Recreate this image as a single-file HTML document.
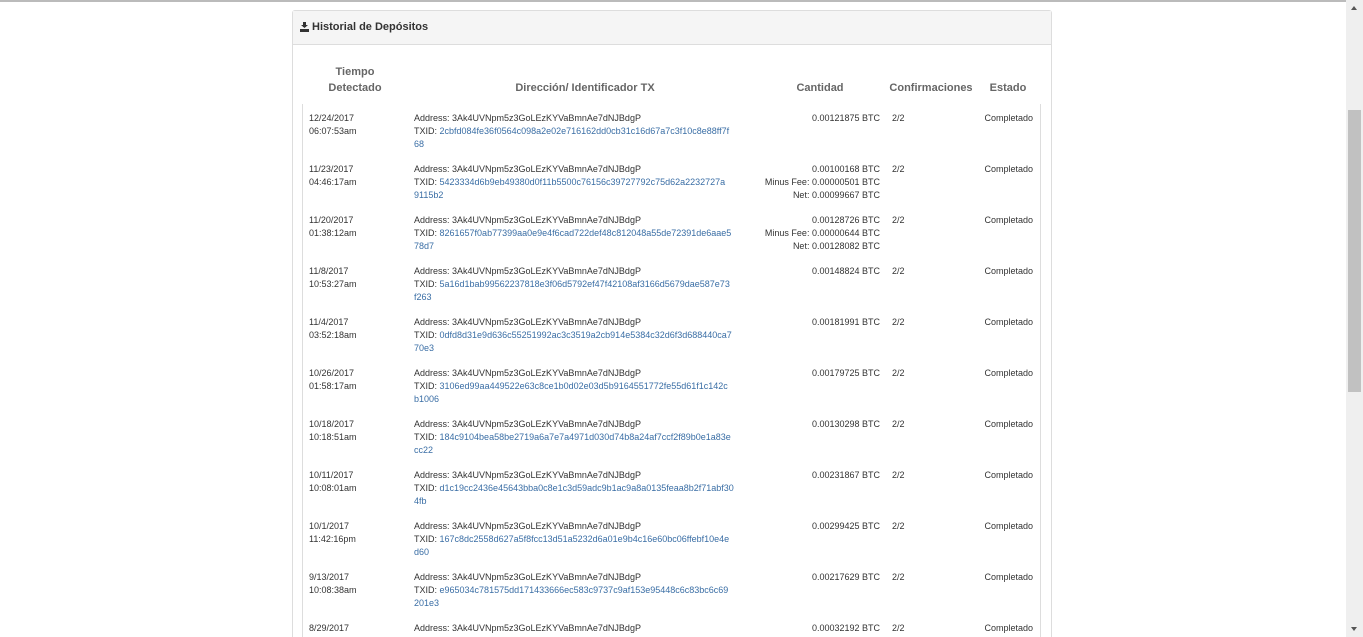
<!DOCTYPE html>
<html><head><meta charset="utf-8"><style>
html,body{margin:0;width:1363px;height:637px;overflow:hidden}
body{background:#fff;font-family:"Liberation Sans",sans-serif;color:#333;position:relative}
.top{position:absolute;left:0;top:0;width:1346px;height:2px;background:#bbb}
.sb{position:absolute;left:1346px;top:0;width:17px;height:637px;background:#efefef}
.thumb{position:absolute;left:1348px;top:110px;width:13px;height:282px;background:#c1c1c1}
.panel{position:absolute;left:292px;top:10px;width:758px;height:626px;border:1px solid #ddd;border-bottom:none;border-radius:3px 3px 0 0}
.ph{height:33px;background:#f5f5f5;border-bottom:1px solid #ddd;font-size:11px;font-weight:bold;line-height:33px;padding-left:19px;color:#333}
.inner{position:absolute;left:302px;top:104px;width:737px;height:533px;border-left:1px solid #ddd;border-right:1px solid #ddd}
.h{position:absolute;font-size:11px;font-weight:bold;color:#666;text-align:center;line-height:16px}
.r{position:absolute;font-size:9px;line-height:13px;color:#333;white-space:nowrap}
a{color:#3a6ea5;text-decoration:none}
</style></head><body>
<div class="top"></div>
<div class="sb"><div style="position:absolute;left:5px;top:6px;border:3.5px solid transparent;border-bottom:4px solid #555;border-top:0"></div><div style="position:absolute;left:5px;top:627px;border:3.5px solid transparent;border-top:4px solid #555;border-bottom:0"></div></div>
<div class="thumb"></div>
<div class="panel"><div class="ph"><svg style="position:absolute;left:7px;top:11px" width="9" height="10" viewBox="0 0 9 10"><rect x="3" y="0" width="3" height="5" fill="#333"/><path d="M1 3h7L4.5 6z" fill="#333"/><rect x="0" y="7" width="9" height="3" fill="#333"/></svg>Historial de Depósitos</div></div>
<div class="inner"></div>
<div class="h" style="left:315px;top:64px;width:80px">Tiempo<br>Detectado</div>
<div class="h" style="left:460px;top:80px;width:250px">Dirección/ Identificador TX</div>
<div class="h" style="left:790px;top:80px;width:60px">Cantidad</div>
<div class="h" style="left:888px;top:80px;width:86px">Confirmaciones</div>
<div class="h" style="left:985px;top:80px;width:46px">Estado</div>
<div id="rows"></div>
<script>
var d=[["12/24/2017","06:07:53am","2cbfd084fe36f0564c098a2e02e716162dd0cb31c16d67a7c3f10c8e88ff7f","68","0.00121875"],
["11/23/2017","04:46:17am","5423334d6b9eb49380d0f11b5500c76156c39727792c75d62a2232727a","9115b2","0.00100168","0.00000501","0.00099667"],
["11/20/2017","01:38:12am","8261657f0ab77399aa0e9e4f6cad722def48c812048a55de72391de6aae5","78d7","0.00128726","0.00000644","0.00128082"],
["11/8/2017","10:53:27am","5a16d1bab99562237818e3f06d5792ef47f42108af3166d5679dae587e73","f263","0.00148824"],
["11/4/2017","03:52:18am","0dfd8d31e9d636c55251992ac3c3519a2cb914e5384c32d6f3d688440ca7","70e3","0.00181991"],
["10/26/2017","01:58:17am","3106ed99aa449522e63c8ce1b0d02e03d5b9164551772fe55d61f1c142c","b1006","0.00179725"],
["10/18/2017","10:18:51am","184c9104bea58be2719a6a7e7a4971d030d74b8a24af7ccf2f89b0e1a83e","cc22","0.00130298"],
["10/11/2017","10:08:01am","d1c19cc2436e45643bba0c8e1c3d59adc9b1ac9a8a0135feaa8b2f71abf30","4fb","0.00231867"],
["10/1/2017","11:42:16pm","167c8dc2558d627a5f8fcc13d51a5232d6a01e9b4c16e60bc06ffebf10e4e","d60","0.00299425"],
["9/13/2017","10:08:38am","e965034c781575dd171433666ec583c9737c9af153e95448c6c83bc6c69","201e3","0.00217629"],
["8/29/2017","","","","0.00032192"]];
var h="";d.forEach(function(r,i){var t=112+i*51;
h+='<div class="r" style="left:309px;top:'+t+'px">'+r[0]+(r[1]?'<br>'+r[1]:'')+'</div>';
h+='<div class="r" style="left:414px;top:'+t+'px">Address: 3Ak4UVNpm5z3GoLEzKYVaBmnAe7dNJBdgP'+(r[2]?'<br>TXID: <a>'+r[2]+'</a><br><a>'+r[3]+'</a>':'')+'</div>';
h+='<div class="r" style="left:700px;width:180px;text-align:right;top:'+t+'px">'+r[4]+' BTC'+(r[5]?'<br>Minus Fee: '+r[5]+' BTC<br>Net: '+r[6]+' BTC':'')+'</div>';
h+='<div class="r" style="left:892px;top:'+t+'px">2/2</div>';
h+='<div class="r" style="left:940px;width:93px;text-align:right;top:'+t+'px">Completado</div>';});
document.getElementById('rows').innerHTML=h;
</script>
</body></html>
